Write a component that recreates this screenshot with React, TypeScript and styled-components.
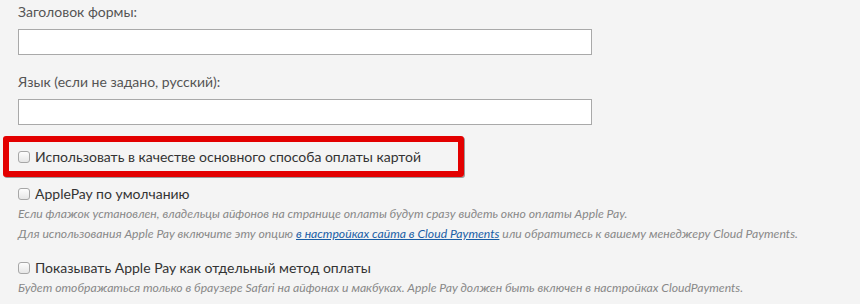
import React from "react";
import styled, { createGlobalStyle } from "styled-components";

const Global = createGlobalStyle`
  html, body {
    margin: 0;
    padding: 0;
    background: #f4f4f4;
  }
  body {
    font-family: Lato, "Noto Sans", sans-serif;
    color: #333;
  }
`;

const Page = styled.div`
  width: 860px;
  height: 304px;
  box-sizing: border-box;
  padding: 0 0 0 18px;
  overflow: hidden;
`;

const Field = styled.div`
  display: flex;
  flex-direction: column;
  margin-top: ${(p: { $top: number }) => p.$top}px;
`;

const Label = styled.label`
  font-size: 14px;
  line-height: 18px;
  color: #555;
  margin-bottom: 8px;
`;

const TextInput = styled.input`
  width: 574px;
  height: 26px;
  box-sizing: border-box;
  border: 1px solid #a9a9a9;
  background: #fff;
  margin: 0;
`;

const Highlight = styled.div`
  margin: 11px 0 0 -15px;
  width: 461px;
  height: 41px;
  box-sizing: border-box;
  border: 6px solid #e30000;
  border-radius: 3px;
  box-shadow: 1px 1px 0 #9a9a9a;
  display: flex;
  align-items: center;
  padding-left: 9px;
`;

const Option = styled.label`
  display: flex;
  align-items: center;
  gap: 5px;
  font-size: 14px;
  line-height: 18px;
  color: #333;
  margin-top: ${(p: { $top?: number }) => p.$top ?? 0}px;
`;

const Box = styled.span`
  width: 12px;
  height: 12px;
  box-sizing: border-box;
  border: 1px solid #a7a7a7;
  border-radius: 3px;
  background: linear-gradient(#fdfdfd, #e6e6e6);
  flex-shrink: 0;
`;

const Hint = styled.div`
  font-size: 12.2px;
  font-style: italic;
  line-height: 20px;
  color: #888;
  margin-top: ${(p: { $top?: number }) => p.$top ?? 0}px;
`;

const Link = styled.a`
  color: #1a5ea6;
  text-decoration: underline;
`;

export default function App() {
  return (
    <>
      <Global />
      <Page>
        <Field $top={3}>
          <Label>Заголовок формы:</Label>
          <TextInput />
        </Field>
        <Field $top={18}>
          <Label>Язык (если не задано, русский):</Label>
          <TextInput />
        </Field>
        <Highlight>
          <Option>
            <Box />
            Использовать в качестве основного способа оплаты картой
          </Option>
        </Highlight>
        <Option $top={8}>
          <Box />
          ApplePay по умолчанию
        </Option>
        <Hint $top={1}>
          Если флажок установлен, владельцы айфонов на странице оплаты будут
          сразу видеть окно оплаты Apple Pay.
        </Hint>
        <Hint>
          Для использования Apple Pay включите эту опцию{" "}
          <Link href="#">в настройках сайта в Cloud Payments</Link> или
          обратитесь к вашему менеджеру Cloud Payments.
        </Hint>
        <Option $top={15}>
          <Box />
          Показывать Apple Pay как отдельный метод оплаты
        </Option>
        <Hint $top={1}>
          Будет отображаться только в браузере Safari на айфонах и макбуках.
          Apple Pay должен быть включен в настройках CloudPayments.
        </Hint>
      </Page>
    </>
  );
}
